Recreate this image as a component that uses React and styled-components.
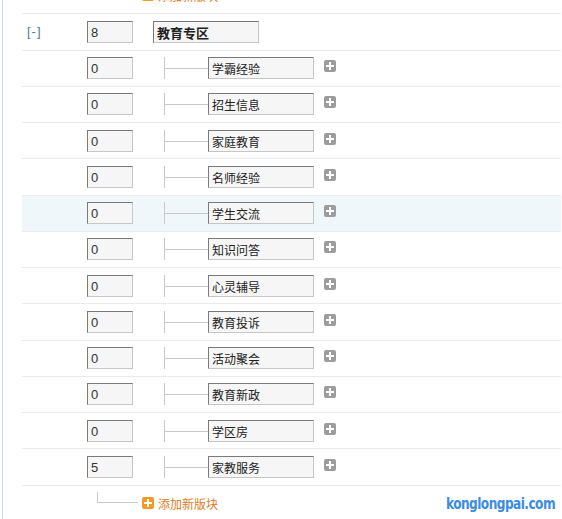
import React from "react";
import styled, { createGlobalStyle } from "styled-components";

const Global = createGlobalStyle`
  html, body { margin: 0; padding: 0; background: #fff; }
  body { font-family: "Liberation Sans", "Noto Sans CJK SC", sans-serif; font-size: 12px; color: #333; }
`;

const Page = styled.div`
  position: relative;
  width: 562px;
  height: 519px;
  overflow: hidden;
  box-sizing: border-box;
  padding-left: 2px;
`;

const Frame = styled.div`
  display: flow-root;
  height: 100%;
  border-left: 1px solid #c6dce9;
  padding-left: 19px;
  padding-right: 1px;
`;

const List = styled.div`
  margin-top: -22px;
`;

const Row = styled.div`
  box-sizing: border-box;
  height: 36.25px;
  display: flex;
  align-items: ${(p) => (p.$top ? "flex-start" : "center")};
  border-bottom: 1px solid #ebebeb;
  background: ${(p) => (p.$hl ? "#f0f7fb" : "transparent")};
`;

const Toggle = styled.div`
  width: 60px;
  padding-left: 5px;
  color: #4f7aa3;
  font-size: 13px;
  letter-spacing: 1px;
  font-family: "Liberation Sans", sans-serif;
`;

const Box = styled.input`
  box-sizing: border-box;
  height: 22px;
  width: ${(p) => p.$w}px;
  margin: 0;
  margin-left: ${(p) => p.$ml || 0}px;
  padding: 1px 0 0 3px;
  border: 1px solid #c6c6c6;
  border-top-color: #7a7a7a;
  border-left-color: #7a7a7a;
  background: #f6f6f6;
  font-family: "Liberation Sans", "Noto Sans CJK SC", sans-serif;
  font-size: ${(p) => (p.$bold ? 13 : 12)}px;
  font-weight: ${(p) => (p.$bold ? 700 : 400)};
  color: #222;
  outline: none;
`;

const OrderBox = styled(Box)`
  font-size: 13px;
  color: #333;
`;

const Tree = styled.span`
  position: relative;
  box-sizing: border-box;
  display: block;
  flex: none;
  width: ${(p) => p.$w}px;
  height: ${(p) => p.$h}px;
  margin-left: ${(p) => p.$ml}px;
  border-left: 1px solid #c9c9c9;
  &::after {
    content: "";
    position: absolute;
    left: 0;
    right: 0;
    top: ${(p) => p.$y}px;
    border-top: 1px solid #c9c9c9;
  }
`;

const PlusIcon = styled.span`
  position: relative;
  display: block;
  flex: none;
  width: 12px;
  height: 12px;
  border-radius: 2px;
  background: ${(p) => p.$c};
  margin-left: ${(p) => p.$ml}px;
  margin-top: ${(p) => p.$mt || 0}px;
  &::before, &::after {
    content: "";
    position: absolute;
    background: #fff;
  }
  &::before { left: 2px; right: 2px; top: 5px; height: 2px; }
  &::after { top: 2px; bottom: 2px; left: 5px; width: 2px; }
`;

const AddText = styled.span`
  margin-left: 4px;
  margin-top: 5px;
  line-height: 14px;
  color: #e07d1c;
  font-size: 12px;
  font-family: "Noto Sans CJK SC", sans-serif;
`;

const AddWrap = styled.div`
  display: flex;
  align-items: flex-start;
  margin-left: 75px;
  padding-top: 6px;
`;

const Watermark = styled.div`
  position: absolute;
  left: 446px;
  top: 495px;
  color: #3b8de0;
  font-family: "DejaVu Sans", sans-serif;
  font-weight: 700;
  font-stretch: condensed;
  font-size: 15px;
  letter-spacing: -0.6px;
  transform: scaleX(0.9);
  transform-origin: left center;
  white-space: nowrap;
`;

const children = [
  ["0", "学霸经验"],
  ["0", "招生信息"],
  ["0", "家庭教育"],
  ["0", "名师经验"],
  ["0", "学生交流", true],
  ["0", "知识问答"],
  ["0", "心灵辅导"],
  ["0", "教育投诉"],
  ["0", "活动聚会"],
  ["0", "教育新政"],
  ["0", "学区房"],
  ["5", "家教服务"],
];

function AddRow() {
  return (
    <Row $top>
      <AddWrap>
        <Tree $w={41} $h={11} $ml={0} $y={10} />
        <PlusIcon $c="#f39a26" $ml={4} $mt={5} />
        <AddText>添加新版块</AddText>
      </AddWrap>
    </Row>
  );
}

export default function App() {
  return (
    <Page>
      <Global />
      <Frame>
        <List>
          <AddRow />
          <Row>
            <Toggle>[-]</Toggle>
            <OrderBox $w={46} readOnly value="8" />
            <Box $w={106} $ml={20} $bold readOnly value="教育专区" />
          </Row>
          {children.map(([n, name, hl]) => (
            <Row key={name} $hl={hl}>
              <Toggle />
              <OrderBox $w={46} readOnly value={n} />
              <Tree $w={44} $h={22} $ml={31} $y={11} />
              <Box $w={106} readOnly value={name} />
              <PlusIcon $c="#9c9c9c" $ml={10} $mt={-4} />
            </Row>
          ))}
          <AddRow />
        </List>
      </Frame>
      <Watermark>konglongpai.com</Watermark>
    </Page>
  );
}
